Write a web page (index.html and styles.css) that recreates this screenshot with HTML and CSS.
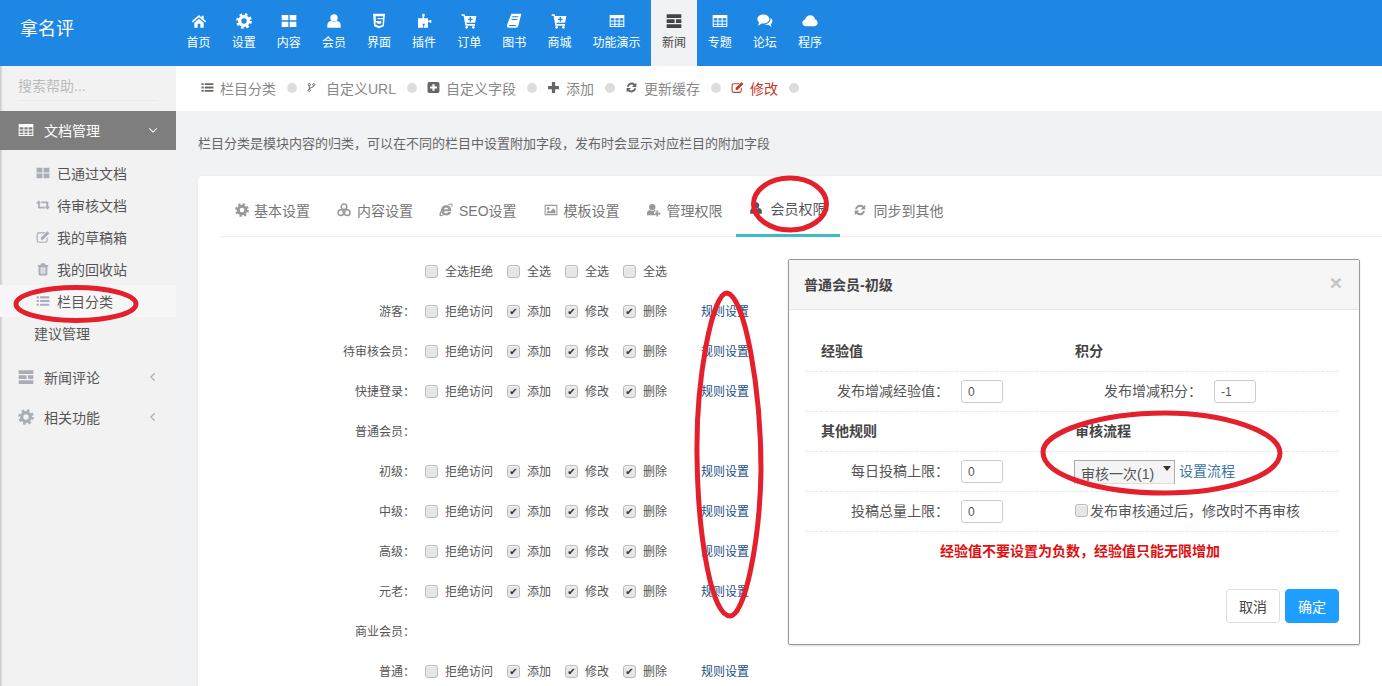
FILE: index.html
```html
<!doctype html>
<html lang="zh">
<head>
<meta charset="UTF-8">
<title>栏目分类</title>
<link rel="stylesheet" href="styles.css">
</head>
<body>
<svg class="sprite" xmlns="http://www.w3.org/2000/svg">
	<symbol id="i-home" viewBox="0 0 24 24"><path d="M12 3 1 12.5l1.6 1.8L12 6.2l9.4 8.1 1.6-1.8-4-3.5V4h-3v2.9zM5 14.6V22h5v-6h4v6h5v-7.4l-7-6z"/></symbol>
	<symbol id="i-cog" viewBox="0 0 24 24"><circle cx="12" cy="12" r="6.5" fill="none" stroke="currentColor" stroke-width="5"/><circle cx="12" cy="12" r="9.8" fill="none" stroke="currentColor" stroke-width="4" stroke-dasharray="3.9 3.8"/></symbol>
	<symbol id="i-th" viewBox="0 0 24 24"><path d="M1 3h10v8H1zM13 3h10v8H13zM1 13h10v8H1zM13 13h10v8H13z"/></symbol>
	<symbol id="i-user" viewBox="0 0 24 24"><circle cx="12" cy="7.500" r="5.500"/><path d="M2 22v-4c0-4 3-6 6-6 1 1 2.500 1.600 4 1.600s3-.6 4-1.600c3 0 6 2 6 6v4z"/></symbol>
	<symbol id="i-html" viewBox="0 0 24 24"><path fill-rule="evenodd" d="M3 1h18l-1.700 19L12 23l-7.300-3zM7 5l.3 7h8.200l-.2 3.500-3.300 1-3.300-1-.1-1.500H6.600l.3 3.400L12 19.500l5.200-1.600.7-8.400H9.700L9.500 7.500h8.700l.2-2.500z"/></symbol>
	<symbol id="i-puzzle" viewBox="0 0 24 24"><path d="M10 1h3v3l-.8 1.500V8H18v3.500h1.500L21 10.500h2v4h-2l-1.500-1H18V22h-6v-2.500l1-1.500v-2h-3v2l1 1.500V22H3V8h6.800V5.500L9 4z"/></symbol>
	<symbol id="i-cartp" viewBox="0 0 24 24"><path fill-rule="evenodd" d="M1 2h4.500l.6 2.500H23l-1.800 10H8.200l.4 2H21V19H6.600L4 4.500H1zM13 6v2.500h-2.500v2H13V13h2v-2.500h2.500v-2H15V6z"/><circle cx="8.500" cy="21.500" r="2"/><circle cx="18.500" cy="21.500" r="2"/></symbol>
	<symbol id="i-book" viewBox="0 0 24 24"><path fill-rule="evenodd" d="M8 1h15l-4.500 18c-.4 1.500-1.500 3-3.500 3H4c-2 0-3-2-2.500-4zM9.500 5l-.4 1.500h9l.4-1.500zM8.300 9l-.4 1.500h9l.4-1.500zM4.500 18c-.2 1 .3 1.500 1 1.500h9.300l.4-1.500z"/></symbol>
	<symbol id="i-table" viewBox="0 0 24 24"><path fill-rule="evenodd" d="M1 3h22v18H1zM2.500 8v3.300h5.600V8zm7.100 0v3.300h4.800V8zm6.300 0v3.300h5.600V8zM2.500 12.800v3.300h5.600v-3.300zm7.100 0v3.300h4.800v-3.300zm6.300 0v3.300h5.600v-3.300zM2.500 17.600v2h5.600v-2zm7.100 0v2h4.800v-2zm6.300 0v2h5.600v-2z"/></symbol>
	<symbol id="i-server" viewBox="0 0 24 24"><path d="M1 2h22v5.500H1zM1 9.500h12V15H1zM15 9.500h8V15h-8zM1 17h22v5.500H1z"/></symbol>
	<symbol id="i-comments" viewBox="0 0 24 24"><ellipse cx="9.500" cy="9" rx="9" ry="6.800"/><path d="M3 12.500 2 19l6-4z"/><path d="M20.300 7.500C22.500 9 23.500 11 23 13c-.3 1.500-1.300 2.800-2.500 3.600l1.500 4.400-5-3.200c-2 .2-4-.2-5.500-1.300 4.500.2 9-2.800 8.800-9z"/></symbol>
	<symbol id="i-cloud" viewBox="0 0 24 24"><path d="M6 20c-3 0-5.500-2.300-5.500-5.300 0-2.500 1.600-4.500 4-5.100C5.500 6 8.700 3.500 12.300 3.500c3.600 0 6.600 2.400 7.300 5.700 2.300.8 3.900 3 3.900 5.500 0 3-2.500 5.300-5.500 5.300z"/></symbol>
	<symbol id="i-list" viewBox="0 0 24 24"><path d="M1 4h4v3.500H1zM7 4h16v3.500H7zM1 10.200h4v3.500H1zM7 10.200h16v3.500H7zM1 16.500h4V20H1zM7 16.500h16V20H7z"/></symbol>
	<symbol id="i-fork" viewBox="0 0 24 24"><g fill="none" stroke="currentColor" stroke-width="2.500"><circle cx="6" cy="4.500" r="2.800"/><circle cx="6" cy="19.500" r="2.800"/><circle cx="18" cy="4.500" r="2.800"/><path d="M6 7.500v9M18 7.500c0 5-12 4-12 9"/></g></symbol>
	<symbol id="i-plussq" viewBox="0 0 24 24"><path fill-rule="evenodd" d="M4 2h16a3 3 0 0 1 3 3v14a3 3 0 0 1-3 3H4a3 3 0 0 1-3-3V5a3 3 0 0 1 3-3zM10 6v4H5.500v4H10v4h4v-4h4.500v-4H14V6z"/></symbol>
	<symbol id="i-plus" viewBox="0 0 24 24"><path d="M9 2h6v7h7v6h-7v7H9v-7H2V9h7z"/></symbol>
	<symbol id="i-refresh" viewBox="0 0 24 24"><path d="M21 3v8h-8l3-3c-3-2.500-7.500-1.500-9 2.500H3.300C5 4 12-.2 18.500 5.500zM3 21v-8h8l-3 3c3 2.500 7.500 1.500 9-2.500h3.700C19 20 12 24.200 5.500 18.500z"/></symbol>
	<symbol id="i-edit" viewBox="0 0 24 24"><path fill-rule="evenodd" d="M5 4h11l-2 2H5a2 2 0 0 0-2 2v10a2 2 0 0 0 2 2h11a2 2 0 0 0 2-2v-4l2-2v6a4 4 0 0 1-4 4H5a4 4 0 0 1-4-4V8a4 4 0 0 1 4-4z"/><path d="M19.500 2 23 5.500 12 16.500H8.500V13z"/></symbol>
	<symbol id="i-retweet" viewBox="0 0 24 24"><path d="M0 9.500 4.500 4 9 9.500H6.500V15H14l2.500 3H4.500a1 1 0 0 1-1-1V9.500zM8 6h12a1 1 0 0 1 1 1v7.500h3L19.500 20 15 14.500h2.500V9h-7z"/></symbol>
	<symbol id="i-trash" viewBox="0 0 24 24"><path fill-rule="evenodd" d="M9 2h6l1.500 3H21v2.500h-1.500V21a2 2 0 0 1-2 2h-11a2 2 0 0 1-2-2V7.500H3V5h4.500zM8 9v11h2V9zm3 0v11h2V9zm3 0v11h2V9z"/></symbol>
	<symbol id="i-cubes" viewBox="0 0 24 24"><g fill="none" stroke="currentColor" stroke-width="2.600"><circle cx="12" cy="6.500" r="4.800"/><circle cx="6.500" cy="16.500" r="4.800"/><circle cx="17.500" cy="16.500" r="4.800"/></g></symbol>
	<symbol id="i-ie" viewBox="0 0 24 24"><path fill-rule="evenodd" d="M12 4c5.500 0 9 3.500 9 8.500V14H8.500c.3 2 1.800 3.500 4 3.500 1.700 0 3-.8 3.500-2h5c-1 3.500-4.300 6-8.500 6-5.200 0-9-3.500-9-8.500S6.800 4 12 4zM8.600 10.800h7.600C16 9 14.500 7.700 12.500 7.700s-3.500 1.300-3.900 3.100z"/><path d="M1 22c-1.500-4 3-12 9-16l1 .5C5.500 10.500 2.500 17 3.500 20c1.500 1 4-.2 5-1l1 .8C7 22 3 23.500 1 22zM15 3c3-2 7-3 8-1 .6 1.500 0 3.500-1 5.500l-1-1c.8-1.500 1-3 .3-3.500-1.200-.8-3.500 0-5.300 1z"/></symbol>
	<symbol id="i-pic" viewBox="0 0 24 24"><path fill-rule="evenodd" d="M1 3h22v18H1zM2.800 5v14h18.400V5zM7 7a2.500 2.500 0 1 1 0 5 2.500 2.500 0 0 1 0-5zM4.500 17.500v-2l3.500-2.500 2.500 2 5.500-6 3.500 4v4.500z"/></symbol>
	<symbol id="i-userp" viewBox="0 0 24 24"><circle cx="9" cy="7" r="5.500"/><path d="M0 21v-3.500c0-3.500 2.500-5.500 5-5.500 1 .9 2.500 1.500 4 1.500s3-.6 4-1.500l1.500.3V15H12v4h2.500v2zM16 13h3v3.500h4v3h-4V23h-3v-3.500h-2v-3h2z"/></symbol>
	<symbol id="i-down" viewBox="0 0 24 24"><path d="M3 8l9 9 9-9" fill="none" stroke="currentColor" stroke-width="2.600"/></symbol>
	<symbol id="i-left" viewBox="0 0 24 24"><path d="M16 3l-9 9 9 9" fill="none" stroke="currentColor" stroke-width="2.600"/></symbol>
</svg>

<header class="topbar">
	<div class="logo">拿名评</div>
	<nav class="mainnav">
		<a href="#"><svg class="navicon"><use href="#i-home"/></svg>首页</a>
		<a href="#"><svg class="navicon"><use href="#i-cog"/></svg>设置</a>
		<a href="#"><svg class="navicon"><use href="#i-th"/></svg>内容</a>
		<a href="#"><svg class="navicon"><use href="#i-user"/></svg>会员</a>
		<a href="#"><svg class="navicon"><use href="#i-html"/></svg>界面</a>
		<a href="#"><svg class="navicon"><use href="#i-puzzle"/></svg>插件</a>
		<a href="#"><svg class="navicon"><use href="#i-cartp"/></svg>订单</a>
		<a href="#"><svg class="navicon"><use href="#i-book"/></svg>图书</a>
		<a href="#"><svg class="navicon"><use href="#i-cartp"/></svg>商城</a>
		<a href="#"><svg class="navicon"><use href="#i-table"/></svg>功能演示</a>
		<a href="#" class="on"><svg class="navicon"><use href="#i-server"/></svg>新闻</a>
		<a href="#"><svg class="navicon"><use href="#i-table"/></svg>专题</a>
		<a href="#"><svg class="navicon"><use href="#i-comments"/></svg>论坛</a>
		<a href="#"><svg class="navicon"><use href="#i-cloud"/></svg>程序</a>
	</nav>
</header>

<div class="wrap">
	<aside class="side">
		<div class="search"><span>搜索帮助...</span></div>
		<a href="#" class="group open"><svg class="gicon"><use href="#i-table"/></svg><span>文档管理</span><svg class="arrow"><use href="#i-down"/></svg></a>
		<ul class="submenu">
			<li><svg class="subicon"><use href="#i-th"/></svg>已通过文档</li>
			<li><svg class="subicon"><use href="#i-retweet"/></svg>待审核文档</li>
			<li><svg class="subicon"><use href="#i-edit"/></svg>我的草稿箱</li>
			<li><svg class="subicon"><use href="#i-trash"/></svg>我的回收站</li>
			<li class="cur"><svg class="subicon"><use href="#i-list"/></svg>栏目分类</li>
			<li class="plain">建议管理</li>
		</ul>
		<a href="#" class="group"><svg class="gicon"><use href="#i-server"/></svg><span>新闻评论</span><svg class="arrow"><use href="#i-left"/></svg></a>
		<a href="#" class="group"><svg class="gicon"><use href="#i-cog"/></svg><span>相关功能</span><svg class="arrow"><use href="#i-left"/></svg></a>
	</aside>

	<main class="main">
		<div class="toolbar">
			<a href="#"><svg class="ticon"><use href="#i-list"/></svg>栏目分类</a><i class="dot"></i>
			<a href="#"><svg class="ticon narrow"><use href="#i-fork"/></svg>自定义URL</a><i class="dot"></i>
			<a href="#"><svg class="ticon"><use href="#i-plussq"/></svg>自定义字段</a><i class="dot"></i>
			<a href="#"><svg class="ticon"><use href="#i-plus"/></svg>添加</a><i class="dot"></i>
			<a href="#"><svg class="ticon"><use href="#i-refresh"/></svg>更新缓存</a><i class="dot"></i>
			<a href="#" class="red"><svg class="ticon"><use href="#i-edit"/></svg>修改</a><i class="dot"></i>
		</div>
		<p class="desc">栏目分类是模块内容的归类，可以在不同的栏目中设置附加字段，发布时会显示对应栏目的附加字段</p>

		<section class="card">
			<div class="tabs">
				<a href="#"><svg class="tabicon"><use href="#i-cog"/></svg>基本设置</a>
				<a href="#"><svg class="tabicon wide"><use href="#i-cubes"/></svg>内容设置</a>
				<a href="#"><svg class="tabicon"><use href="#i-ie"/></svg>SEO设置</a>
				<a href="#"><svg class="tabicon wide"><use href="#i-pic"/></svg>模板设置</a>
				<a href="#"><svg class="tabicon wide"><use href="#i-userp"/></svg>管理权限</a>
				<a href="#" class="on"><svg class="tabicon"><use href="#i-user"/></svg>会员权限</a>
				<a href="#"><svg class="tabicon"><use href="#i-refresh"/></svg>同步到其他</a>
			</div>

			<div class="perms">
				<div class="row">
					<label class="name"></label>
					<label class="cell"><input type="checkbox">全选拒绝</label>
					<label class="cell"><input type="checkbox">全选</label>
					<label class="cell"><input type="checkbox">全选</label>
					<label class="cell"><input type="checkbox">全选</label>
				</div>
				<div class="row">
					<label class="name">游客：</label>
					<label class="cell"><input type="checkbox">拒绝访问</label>
					<label class="cell"><input type="checkbox" checked>添加</label>
					<label class="cell"><input type="checkbox" checked>修改</label>
					<label class="cell"><input type="checkbox" checked>删除</label>
					<a href="#" class="rule">规则设置</a>
				</div>
				<div class="row">
					<label class="name">待审核会员：</label>
					<label class="cell"><input type="checkbox">拒绝访问</label>
					<label class="cell"><input type="checkbox" checked>添加</label>
					<label class="cell"><input type="checkbox" checked>修改</label>
					<label class="cell"><input type="checkbox" checked>删除</label>
					<a href="#" class="rule">规则设置</a>
				</div>
				<div class="row">
					<label class="name">快捷登录：</label>
					<label class="cell"><input type="checkbox">拒绝访问</label>
					<label class="cell"><input type="checkbox" checked>添加</label>
					<label class="cell"><input type="checkbox" checked>修改</label>
					<label class="cell"><input type="checkbox" checked>删除</label>
					<a href="#" class="rule">规则设置</a>
				</div>
				<div class="row">
					<label class="name">普通会员：</label>
				</div>
				<div class="row">
					<label class="name">初级：</label>
					<label class="cell"><input type="checkbox">拒绝访问</label>
					<label class="cell"><input type="checkbox" checked>添加</label>
					<label class="cell"><input type="checkbox" checked>修改</label>
					<label class="cell"><input type="checkbox" checked>删除</label>
					<a href="#" class="rule">规则设置</a>
				</div>
				<div class="row">
					<label class="name">中级：</label>
					<label class="cell"><input type="checkbox">拒绝访问</label>
					<label class="cell"><input type="checkbox" checked>添加</label>
					<label class="cell"><input type="checkbox" checked>修改</label>
					<label class="cell"><input type="checkbox" checked>删除</label>
					<a href="#" class="rule">规则设置</a>
				</div>
				<div class="row">
					<label class="name">高级：</label>
					<label class="cell"><input type="checkbox">拒绝访问</label>
					<label class="cell"><input type="checkbox" checked>添加</label>
					<label class="cell"><input type="checkbox" checked>修改</label>
					<label class="cell"><input type="checkbox" checked>删除</label>
					<a href="#" class="rule">规则设置</a>
				</div>
				<div class="row">
					<label class="name">元老：</label>
					<label class="cell"><input type="checkbox">拒绝访问</label>
					<label class="cell"><input type="checkbox" checked>添加</label>
					<label class="cell"><input type="checkbox" checked>修改</label>
					<label class="cell"><input type="checkbox" checked>删除</label>
					<a href="#" class="rule">规则设置</a>
				</div>
				<div class="row">
					<label class="name">商业会员：</label>
				</div>
				<div class="row">
					<label class="name">普通：</label>
					<label class="cell"><input type="checkbox">拒绝访问</label>
					<label class="cell"><input type="checkbox" checked>添加</label>
					<label class="cell"><input type="checkbox" checked>修改</label>
					<label class="cell"><input type="checkbox" checked>删除</label>
					<a href="#" class="rule">规则设置</a>
				</div>
			</div>

			<div class="modal">
				<div class="modal-head"><b>普通会员-初级</b><span class="close">×</span></div>
				<div class="modal-body">
					<div class="mrow">
						<div class="mcol"><b class="mtitle first">经验值</b></div>
						<div class="mcol"><b class="mtitle">积分</b></div>
					</div>
					<div class="mrow">
						<div class="mcol"><label class="mlabel">发布增减经验值：</label><input class="num" type="text" value="0"></div>
						<div class="mcol"><label class="mlabel second">发布增减积分：</label><input class="num" type="text" value="-1"></div>
					</div>
					<div class="mrow">
						<div class="mcol"><b class="mtitle first">其他规则</b></div>
						<div class="mcol"><b class="mtitle">审核流程</b></div>
					</div>
					<div class="mrow">
						<div class="mcol"><label class="mlabel">每日投稿上限：</label><input class="num" type="text" value="0"></div>
						<div class="mcol"><span class="selbox"><select><option>审核一次(1)</option></select><i class="caret"></i></span><a href="#" class="flow">设置流程</a></div>
					</div>
					<div class="mrow">
						<div class="mcol"><label class="mlabel">投稿总量上限：</label><input class="num" type="text" value="0"></div>
						<div class="mcol"><label class="recheck"><input type="checkbox">发布审核通过后，修改时不再审核</label></div>
					</div>
					<p class="warn">经验值不要设置为负数，经验值只能无限增加</p>
				</div>
				<div class="modal-foot">
					<button class="btn" type="button">取消</button>
					<button class="btn primary" type="button">确定</button>
				</div>
			</div>
		</section>
	</main>
</div>

<svg class="marks" viewBox="0 0 1382 686" xmlns="http://www.w3.org/2000/svg">
	<ellipse cx="790" cy="204" rx="36.500" ry="26"/>
	<ellipse cx="76" cy="304" rx="60" ry="16.500"/>
	<path d="M727 293C745 296 761 390 761 470 760 540 745 616 730 616 712 616 698 540 697 455 696 380 712 293 727 293z"/>
	<path d="M1165 413C1225 413 1280 432 1280 453 1280 476 1225 493 1165 493 1100 493 1043 476 1043 452 1043 432 1100 413 1165 413z"/>
</svg>
</body>
</html>
```

FILE: styles.css
```css
* {margin:0;padding:0;box-sizing:border-box;}
html,body{height:100%;overflow:hidden;}
body{font-size:12px;font-family:"Liberation Sans","Noto Sans CJK SC",sans-serif;color:#555;background:#f1f2f4;}
ul,li{list-style:none;}
a{text-decoration:none;color:inherit;}
i{font-style:normal;}
.sprite{display:none;}
svg{fill:currentColor;flex:none;}

/* top bar */
.topbar{display:flex;height:66px;background:#1e87e4;color:#fff;}
.logo{width:176px;padding:16px 0 0 20px;font-size:18px;line-height:26px;}
.mainnav{display:flex;}
.mainnav a{display:flex;flex-direction:column;align-items:center;padding:13px 10.55px 0;line-height:16px;}
.mainnav a.on{background:#f1f2f4;color:#444;padding:13px 11px 0;}
.navicon{width:16px;height:16px;margin-bottom:6px;}

/* sidebar */
.wrap{display:flex;height:620px;}
.side{width:176px;flex:none;background:linear-gradient(90deg,#c8c8c8 0,#f3f2f3 3px);color:#555;}
.search{height:45px;padding:12px 18px 0;color:#bbb;font-size:14px;line-height:17px;}
.search span{display:block;height:23px;border-bottom:1px solid #ebebeb;}
.group{display:flex;align-items:center;height:40px;padding:0 18px;font-size:14px;}
.group.open{height:39px;padding-bottom:1px;background:#7e7e7e;color:#fff;}
.gicon{width:16px;height:16px;color:#a9aeb6;margin-right:10px;}
.group.open .gicon{color:#fff;}
.group span{flex:1;}
.arrow{width:10px;height:10px;color:#aaa;}
.group.open .arrow{color:#fff;}
.submenu{padding:7px 0 8px;}
.submenu li{display:flex;align-items:center;height:32px;padding-left:36px;font-size:14px;}
.submenu li.cur{background:#f7f6f7;}
.submenu li.plain{padding-left:34px;}
.subicon{width:14px;height:14px;color:#a9aeb6;margin-right:7px;}

/* toolbar */
.main{flex:1;min-width:0;}
.toolbar{display:flex;align-items:center;height:45px;padding:0 0 2px 25px;background:#fff;color:#888;font-size:14px;}
.toolbar a{display:flex;align-items:center;}
.toolbar a.red{color:#c0392b;}
.ticon{width:13px;height:13px;margin-right:6px;color:#666;}
.ticon.narrow{width:9px;margin-right:10px;}
.red .ticon{color:#c0392b;}
.dot{width:10px;height:10px;border-radius:50%;background:#ddd;margin:0 10.5px;}
.desc{height:65px;padding:24px 0 0 22px;font-size:13px;line-height:18px;color:#666;}

/* card and tabs */
.card{position:relative;margin-left:22px;height:520px;background:#fff;border-radius:4px 0 0 0;box-shadow:0 0 2px #e4e4e4;}
.tabs{display:flex;height:61px;margin-left:22px;padding-left:2px;border-bottom:1px solid #eee;font-size:14px;color:#777;}
.tabs a{display:flex;align-items:center;height:60px;padding:7px 13px 0;}
.tabs a.on{border-bottom:3px solid #3cbcc9;margin-bottom:-1px;height:61px;padding-top:5px;color:#555;}
.tabicon{width:14px;height:14px;margin-right:5px;color:#999;}
.tabicon.wide{width:16px;}
.tabs a:nth-child(3) .tabicon{margin-right:6px;}
.tabs a:nth-child(7) .tabicon{margin-right:7px;}
.tabs a.on .tabicon{margin-right:8px;color:#555;}

/* permission rows */
.perms{padding:13px 0 0 22px;}
.row{display:grid;grid-template-columns:205px 82px 58px 58px 78px auto;justify-content:start;align-items:center;height:40px;}
.row .name{padding-right:10px;text-align:right;color:#555;font-family:"Liberation Sans","Noto Sans CJK TC",sans-serif;}
.row .name:empty{height:1px;}
.cell{display:flex;align-items:center;gap:7px;color:#555;}
.cell input{margin-top:2px;}
input[type=checkbox]{appearance:none;position:relative;width:13px;height:13px;border:1px solid #bbb;border-radius:3px;background:#e6e6e6;box-shadow:inset 0 1px 1px #f5f5f5;flex:none;}
input[type=checkbox]:checked::after{content:"✔";position:absolute;left:0;top:-1px;width:100%;text-align:center;font:10px/13px "DejaVu Sans",sans-serif;color:#333;}
.rule{color:#1c4f85;}

/* modal */
.modal{position:absolute;left:590px;top:83px;width:572px;height:386px;background:#fff;border:1px solid #999;border-radius:2px;box-shadow:0 1px 2px rgba(0,0,0,.15);}
.modal-head{display:flex;align-items:center;justify-content:space-between;height:50px;padding:0 17px 2px 15px;background:#f6f6f6;border-bottom:1px solid #e8e8e8;font-size:14px;color:#444;}
.close{font-size:21px;font-weight:bold;color:#c4c4c4;margin-top:-2px;}
.modal-body{padding:22px 20px 0 16px;}
.mrow{display:grid;grid-template-columns:270px 1fr;height:40px;border-bottom:1px dashed #e6e6e6;}
.mcol{display:flex;align-items:center;}
.mtitle{margin-bottom:4px;font-size:14px;color:#444;}
.mtitle.first{margin-left:16px;}
.mlabel{width:144px;margin:0 12px 4px 0;text-align:right;font-size:14px;color:#555;font-family:"Liberation Sans","Noto Sans CJK TC",sans-serif;}
.mlabel.second{width:127px;}
.num{width:42px;height:23px;padding:0 6px;border:1px solid #ccc;border-radius:3px;font:12px "Liberation Sans",sans-serif;color:#555;}
.selbox{position:relative;display:block;width:101px;height:24px;margin-left:-1px;}
.selbox select{appearance:none;width:100%;height:100%;padding:5px 0 0 6px;border:1px solid #aaa;border-bottom-color:#ddd;background:#f4f4f4;font:14px "Liberation Sans","Noto Sans CJK SC",sans-serif;color:#555;border-radius:0;}
.caret{position:absolute;right:4px;top:6px;border:4px solid transparent;border-top:5px solid #333;border-bottom:0;}
.flow{margin:0 0 4px 4px;font-size:14px;color:#3a76a8;}
.recheck{display:flex;align-items:center;gap:2px;font-size:14px;color:#555;margin-top:-3px;}
.warn{height:40px;padding-left:16px;line-height:38px;text-align:center;font-size:14px;font-weight:bold;color:#e01010;}
.modal-foot{display:flex;justify-content:flex-end;gap:5px;padding:17px 20px 0 0;}
.btn{width:54px;height:34px;border:1px solid #ddd;border-radius:4px;background:#fff;font:14px "Liberation Sans","Noto Sans CJK SC",sans-serif;color:#444;}
.btn.primary{border-color:#1e9fff;background:#1e9fff;color:#fff;}

/* hand drawn red circles laid over the screenshot */
.marks{position:absolute;left:0;top:0;width:1382px;height:686px;pointer-events:none;}
.marks ellipse,.marks path{fill:none;stroke:#e4202c;stroke-width:5;}
```
